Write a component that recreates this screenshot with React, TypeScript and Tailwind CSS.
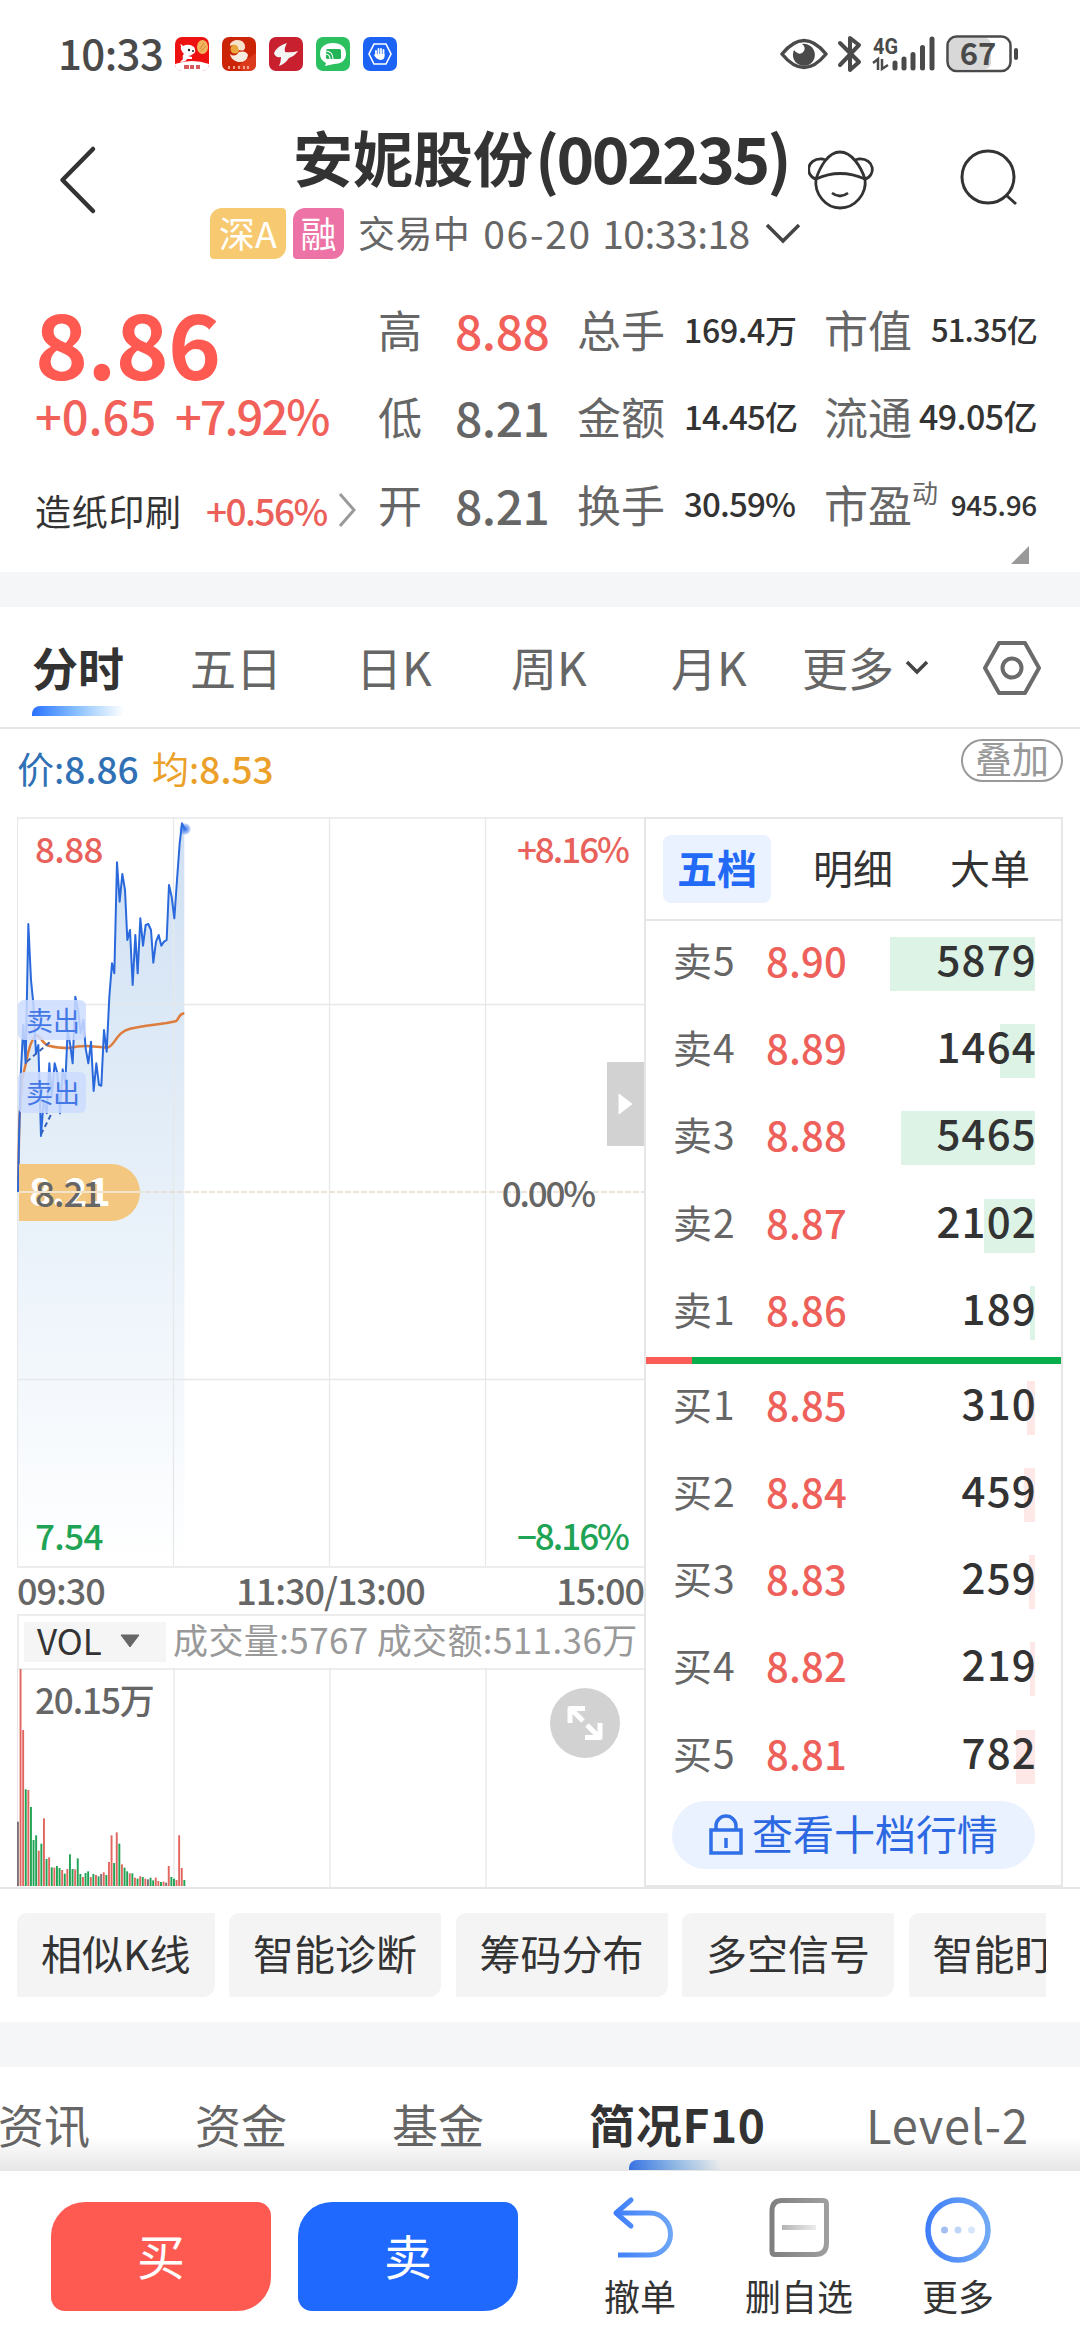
import type { ReactNode } from 'react'

const quoteRows = [
  { a: '高', av: '8.88', up: true, b: '总手', bv: '169.4万', bs: 'text-[32px] tracking-[-0.3px]', c: '市值', cv: '51.35亿', cs: 'text-[31px] tracking-[-0.8px]' },
  { a: '低', av: '8.21', up: false, b: '金额', bv: '14.45亿', bs: 'text-[33px] tracking-[-0.8px]', c: '流通', cv: '49.05亿', cs: 'text-[34px] tracking-[-0.6px]' },
  { a: '开', av: '8.21', up: false, b: '换手', bv: '30.59%', bs: 'text-[33px] tracking-[-0.8px]', c: '市盈', cv: '945.96', cs: 'text-[28px] tracking-[-0.3px]' },
]

const sells = [
  { name: '卖5', price: '8.90', vol: 5879, bar: 145 },
  { name: '卖4', price: '8.89', vol: 1464, bar: 35 },
  { name: '卖3', price: '8.88', vol: 5465, bar: 134 },
  { name: '卖2', price: '8.87', vol: 2102, bar: 51 },
  { name: '卖1', price: '8.86', vol: 189, bar: 5 },
]

const buys = [
  { name: '买1', price: '8.85', vol: 310, bar: 8 },
  { name: '买2', price: '8.84', vol: 459, bar: 11 },
  { name: '买3', price: '8.83', vol: 259, bar: 6 },
  { name: '买4', price: '8.82', vol: 219, bar: 5 },
  { name: '买5', price: '8.81', vol: 782, bar: 19 },
]

const pricePoints =
  '54,1176 57,1020 62,830 70,675 77,790 85,372 93,540 100,610 108,760 115,735 123,1008 131,900 140,940 148,790 155,890 164,790 172,820 180,940 188,808 196,850 203,690 210,730 218,790 226,590 235,635 242,700 250,660 257,745 265,790 273,725 281,873 289,790 297,855 304,857 312,690 320,755 328,590 336,490 343,520 351,187 359,305 367,222 375,270 382,420 390,390 398,555 406,405 413,520 421,355 429,437 437,375 445,372 453,390 460,488 468,425 476,405 484,437 492,425 500,420 507,255 515,290 523,355 531,240 539,130 546,70 553,85'

const avgPath =
  'M54,1176 L58,960 L66,840 L80,780 Q90,722 108,706 C125,706 125,735 150,738 C165,742 185,744 205,744 C225,740 240,737 260,738 C285,740 300,743 325,742 C345,735 350,695 390,686 C420,680 460,674 500,669 Q518,666 527,664 C537,660 534,642 553,640'

// r = rise, g = fall, k = flat; height in thirds of a pixel
const volumes: [number, string][] = [
  [193, 'k'], [651, 'r'], [468, 'r'], [290, 'g'], [288, 'r'], [237, 'g'], [138, 'g'], [152, 'g'], [106, 'r'], [127, 'g'],
  [203, 'r'], [81, 'g'], [86, 'r'], [56, 'g'], [55, 'r'], [60, 'g'], [54, 'g'], [48, 'r'], [37, 'g'], [51, 'r'],
  [95, 'g'], [51, 'g'], [50, 'r'], [83, 'g'], [36, 'g'], [27, 'r'], [39, 'g'], [44, 'g'], [27, 'r'], [36, 'g'],
  [33, 'r'], [29, 'g'], [36, 'k'], [41, 'r'], [33, 'g'], [72, 'r'], [152, 'r'], [69, 'g'], [161, 'r'], [127, 'g'],
  [65, 'r'], [55, 'g'], [44, 'g'], [38, 'r'], [38, 'g'], [25, 'r'], [22, 'g'], [29, 'r'], [27, 'g'], [22, 'r'],
  [20, 'k'], [25, 'g'], [17, 'g'], [25, 'r'], [15, 'r'], [12, 'g'], [13, 'r'], [10, 'k'], [60, 'r'], [27, 'g'],
  [22, 'g'], [18, 'r'], [152, 'r'], [54, 'r'], [18, 'g'],
]

const volColor: Record<string, string> = { r: '#e0665f', g: '#1fa355', k: '#7a7376' }

const StatusBar = () => (
  <div className="flex h-[108px] items-center pl-[58px] pr-[60px] text-[#4a4a4a]">
    <span className="w-[117px] whitespace-nowrap text-[42px] leading-none font-medium tracking-[-0.6px] pb-1">10:33</span>
    <div className="flex gap-[13px]">
      <svg width="34" height="34" viewBox="0 0 34 34">
        <rect width="34" height="34" rx="7" fill="#ee1111" />
        <path d="M0 27 Q17 21 34 27 Q34 34 27 34 H7 Q0 34 0 27Z" fill="#fff" />
        <path d="M6 9 Q4 5 8 9 Q14 6 19 10 Q22 15 18 17 Q16 19 13 19 L17 20 V22 L12 22 Q11 25 5 25 L8 22 Q7 18 9 17 Q5 13 6 9Z" fill="#fff" />
        <circle cx="14" cy="13" r="1.2" fill="#222" />
        <circle cx="18" cy="14" r="1" fill="#222" />
        <ellipse cx="27.500" cy="10" rx="5.500" ry="7" fill="#f0b45c" />
        <path d="M25 12 L29 6 M26 14 L31 9" stroke="#c97a28" strokeWidth="0.8" />
        <path d="M9 28h5v4h-5zM15 28h4v4h-4zM21 28h4v4h-4z" fill="#c33" opacity=".8" />
      </svg>
      <svg width="34" height="34" viewBox="0 0 34 34">
        <rect width="34" height="34" rx="7" fill="#cc2407" />
        <path d="M34 16 L14 30 L22 34 H27 Q34 34 34 27Z" fill="#dc3a1c" />
        <circle cx="13" cy="12" r="4.500" fill="#e8a53c" />
        <path d="M8 7 Q12 1 20 4 Q25 8 22 13 Q16 15 16 10 Q14 6 8 9Z" fill="#f6e3cc" />
        <path d="M8 17 Q13 21 17 15 Q24 13 26 18 Q25 26 16 25 Q9 23 8 17Z" fill="#f8ece0" />
        <path d="M7 29v3M12 29v3M17 29v3M22 29v3M26 29v3" stroke="#f6c9b8" strokeWidth="1.500" />
      </svg>
      <svg width="34" height="34" viewBox="0 0 34 34">
        <rect width="34" height="34" rx="7" fill="#c8202f" />
        <path d="M18 6 Q8 9 5 16 Q6 21 12 20 Q12 25 10 29 Q16 27 20 21 Q26 19 29 14 Q23 16 16 15 Q15 11 18 6Z" fill="#f4f4f4" />
      </svg>
      <svg width="34" height="34" viewBox="0 0 34 34">
        <rect width="34" height="34" rx="7" fill="#2bc160" />
        <path d="M17 6 C25 6 30 10 30 17 C30 24 24 27 18 27 L9 29 L10 26 C6 24 4 21 4 17 C4 10 9 6 17 6Z" fill="#fff" />
        <rect x="10" y="12" width="15" height="10" rx="1.500" fill="#22b457" />
        <path d="M9 17 q5 0 5 5 M9 14 q8 0 8 8" stroke="#fff" strokeWidth="1.200" fill="none" />
      </svg>
      <svg width="34" height="34" viewBox="0 0 34 34">
        <rect width="34" height="34" rx="7" fill="#1c62f5" />
        <path d="M11 7 H23 L28 17 L23 27 H11 L6 17Z" fill="none" stroke="#fff" strokeWidth="1.600" />
        <path d="M13 18 V14 M15.500 18 V12 M18 18 V12 M20.500 18 V13" stroke="#fff" strokeWidth="1.800" strokeLinecap="round" />
        <path d="M12 17 H21.500 V20 Q21 23 17 23 Q13 22 11 18Z" fill="#fff" />
      </svg>
    </div>
    <svg className="ml-auto" width="240" height="40" viewBox="0 0 240 40" fill="none">
      <path d="M2 20 Q24 -7 46 20 Q24 47 2 20Z" stroke="#4a4a4a" strokeWidth="3.500" strokeLinejoin="round" />
      <path d="M22 10 A11 11 0 1 1 14 16 Q20 23 24 17 Q26 13 22 10Z" fill="#4a4a4a" />
      <path d="M60 9 L79 28 L70 36 V4 L79 11 L60 31" stroke="#4a4a4a" strokeWidth="4" strokeLinejoin="round" strokeLinecap="round" />
      <text x="93" y="19.500" fontSize="22" fontWeight="700" fill="#4a4a4a" textLength="25" lengthAdjust="spacingAndGlyphs" fontFamily="Roboto, sans-serif">4G</text>
      <path d="M93 29 L98 25 V36 M102 25 V35 L108 31" stroke="#4a4a4a" strokeWidth="2.500" />
      <path d="M115 29 V34 M124 25 V34 M133 20.500 V34 M142.500 13.500 V34 M152 5 V34" stroke="#4a4a4a" strokeWidth="5" strokeLinecap="round" />
      <rect x="169" y="4" width="42" height="31" rx="6" fill="#d8d8d8" />
      <rect x="211" y="4" width="22" height="31" rx="6" fill="#fff" />
      <rect x="167.500" y="2.500" width="63" height="34.500" rx="9" stroke="#4a4a4a" strokeWidth="2.500" />
      <text x="198" y="31" textAnchor="middle" fontSize="31" fontWeight="700" fill="#4a4a4a" fontFamily="'Noto Sans CJK SC', sans-serif">67</text>
      <rect x="234" y="14" width="4" height="12" rx="2" fill="#4a4a4a" />
    </svg>
  </div>
)

const Tag = ({ color, children }: { color: string; children: ReactNode }) => (
  <span className={`flex h-[51px] items-center justify-center rounded-tl-[12px] rounded-tr-[4px] rounded-br-[12px] rounded-bl-[4px] text-[36px] leading-none text-white pb-1 ${color}`}>
    {children}
  </span>
)

const Header = () => (
  <div className="flex h-[174px] text-[#333]">
    <svg className="mt-[33px] ml-[58px] shrink-0" width="40" height="76" viewBox="0 0 40 76" fill="none">
      <path d="M35 8 L4.500 39 L35 70" stroke="#333" strokeWidth="4.500" strokeLinecap="round" strokeLinejoin="round" />
    </svg>
    <div className="ml-[112px] flex w-[598px] shrink-0 flex-col">
      <div className="flex h-[100px] items-center pl-[83px] pb-[5px] whitespace-nowrap font-bold leading-none">
        <span className="text-[60px]">安妮股份</span>
        <span className="ml-[2px] text-[64px] tracking-[-2.6px]">(002235)</span>
      </div>
      <div className="flex items-center text-[#666]">
        <Tag color="w-[76px] bg-[#f7c970]">深A</Tag>
        <Tag color="ml-[7px] w-[51px] bg-[#ed73a6]">融</Tag>
        <span className="ml-[14px] pb-[3px] text-[37px] leading-none tracking-[0.4px]">交易中</span>
        <span className="ml-[13px] w-[119px] pb-[3px] text-[39px] leading-none whitespace-nowrap tracking-[1.7px]">06-20</span>
        <span className="w-[150px] pb-[3px] text-[39px] leading-none whitespace-nowrap tracking-[-0.5px]">10:33:18</span>
        <svg className="ml-[13px]" width="36" height="22" viewBox="0 0 36 22" fill="none">
          <path d="M2 2 L18 18 L34 2" stroke="#444" strokeWidth="3.500" />
        </svg>
      </div>
    </div>
    <svg className="mt-[41px] shrink-0" width="66" height="62" viewBox="0 0 66 62" fill="none" stroke="#333" strokeWidth="2.800">
      <path d="M8 30 C12 18 20 3 32 3 C44 3 53 18 57 30" />
      <path d="M8 30 C6 45 18 59 32 59 C47 59 59 45 57 30" />
      <path d="M8 30 Q32 19 57 30" />
      <path d="M8 30 C-3 27 -2 9 14 10 L18 11 M57 30 C68 27 67 9 51 10 L47 11" />
      <path d="M24 44 Q32 50 40 44" />
    </svg>
    <svg className="mt-[41px] ml-[86px] shrink-0" width="60" height="60" viewBox="0 0 60 60" fill="none" stroke="#333" strokeWidth="3">
      <circle cx="28" cy="28" r="26" />
      <path d="M46 46 L56 55" />
    </svg>
  </div>
)

const Quote = () => (
  <div className="relative flex h-[290px] pl-[35px]">
    <div className="w-[343px] text-[#ff5a52]">
      <div className="mt-[10px] text-[90px] leading-[98px] font-bold tracking-[-0.8px]">8.86</div>
      <div className="flex h-[48px] items-center leading-none whitespace-nowrap text-[#f2605a] font-medium">
        <span className="w-[140px] text-[47px]">+0.65</span>
        <span className="text-[47px] tracking-[-2px]">+7.92%</span>
      </div>
      <div className="mt-[47px] flex h-[50px] items-center leading-none whitespace-nowrap">
        <span className="w-[171px] text-[36px] text-[#333] tracking-[0.7px]">造纸印刷</span>
        <span className="w-[130px] text-[37px] text-[#ec605a] font-medium tracking-[-1.6px]">+0.56%</span>
        <svg width="22" height="38" viewBox="0 0 22 38" fill="none">
          <path d="M4 3 L18 19 L4 35" stroke="#9a9a9a" strokeWidth="3" />
        </svg>
      </div>
    </div>
    <div className="flex flex-col pt-[5px]">
      {quoteRows.map((r) => (
        <div key={r.a} className="flex h-[87.500px] w-[659px] items-center pb-[4px] leading-none whitespace-nowrap text-[#333]">
          <span className="w-[77px] text-[44px] text-[#666]">{r.a}</span>
          <span className={r.up ? 'w-[122px] text-[48px] font-medium text-[#f2605a] tracking-[-0.5px]' : 'w-[122px] text-[48px] font-medium text-[#666] tracking-[-0.5px]'}>{r.av}</span>
          <span className="w-[107px] text-[44px] text-[#666]">{r.b}</span>
          <span className={`w-[140px] font-medium ${r.bs}`}>{r.bv}</span>
          <span className="flex text-[44px] text-[#666]">
            {r.c}
            {r.c === '市盈' && <span className="-mt-[4px] text-[26px] leading-[28px]">动</span>}
          </span>
          <span className={`ml-auto font-medium ${r.cs}`}>{r.cv}</span>
        </div>
      ))}
    </div>
    <svg className="absolute right-[51px] bottom-[8px]" width="18" height="18">
      <path d="M18 0 V18 H0Z" fill="#999" />
    </svg>
  </div>
)

const PeriodTabs = () => (
  <div className="flex h-[122px] border-b-2 border-[#e6e6e6] text-[46px] leading-none whitespace-nowrap text-[#666]">
    <div className="ml-[32px] w-[158px] pt-[36px]">
      <span className="font-bold text-[#333]">分时</span>
      <div className="mt-[17px] h-[10px] w-[92px] rounded-tl-[8px] bg-linear-to-r from-[#2a70ff] via-[#8cc2ff] to-white" />
    </div>
    <span className="w-[166px] pt-[36px]">五日</span>
    <span className="w-[155px] pt-[36px]">日K</span>
    <span className="w-[160px] pt-[36px]">周K</span>
    <span className="w-[131px] pt-[36px]">月K</span>
    <span className="w-[103px] pt-[36px]">更多</span>
    <svg className="mt-[53px]" width="24" height="15" viewBox="0 0 24 15" fill="none">
      <path d="M2 2 L12 12 L22 2" stroke="#444" strokeWidth="3.500" />
    </svg>
    <svg className="mt-[33px] ml-[53px]" width="60" height="56" viewBox="0 0 60 56" fill="none" stroke="#6b6b6b" strokeWidth="4">
      <path d="M17 3 H43 L57 28 L43 53 H17 L3 28Z" strokeLinejoin="round" />
      <circle cx="30" cy="28" r="9.500" />
    </svg>
  </div>
)

const MinuteChart = () => (
  <div className="relative h-[751px] w-[627px]">
    <svg className="block" width="627" height="751" viewBox="0 0 627 751" fill="none">
      <defs>
        <linearGradient id="area" x1="0" y1="0" x2="0" y2="750" gradientUnits="userSpaceOnUse">
          <stop offset="0" stopColor="#cfe0f3" />
          <stop offset="0.5" stopColor="#e7f0f9" />
          <stop offset="1" stopColor="#ffffff" />
        </linearGradient>
        <radialGradient id="dot">
          <stop offset="0" stopColor="#2a6ae8" />
          <stop offset="1" stopColor="#2a6ae8" stopOpacity="0.2" />
        </radialGradient>
      </defs>
      <path d={`M0,750 L${pricePoints.split(' ').map((p) => p.split(',').map((v) => (Number(v) / 3 - 17).toFixed(1)).join(',')).join(' L')} L167.500,750Z`} fill="url(#area)" />
      <path d="M0.500 1 H627 M0 187.500 H627 M0 562.500 H627 M0 750 H627 M0.500 0 V750 M156.500 0 V750 M312.500 0 V750 M468.500 0 V750" stroke="#e6e8ea" strokeWidth="1.300" />
      <path d="M0 375 H627" stroke="#e6dccd" strokeWidth="1.500" strokeDasharray="6 2" />
      <g transform="translate(-17 -17) scale(0.33333)">
        <path d={avgPath} stroke="#dd7d3d" strokeWidth="7.500" />
        <polyline points={pricePoints} stroke="#2a69dc" strokeWidth="6" strokeLinejoin="round" />
        <circle cx="555" cy="87" r="17" fill="url(#dot)" />
        <path d="M80 785 L155 722 M123 1003 L155 940" stroke="#3563b8" strokeWidth="6" strokeDasharray="15 10" />
      </g>
    </svg>
    <div className="absolute top-[183px] left-[1px] h-[40px] w-[68px] rounded-[6px] bg-[#cddcff]/85 pl-[8px] pt-[6px] text-[27px] leading-none whitespace-nowrap text-[#4478e6]">卖出</div>
    <div className="absolute top-[255px] left-[1px] h-[41px] w-[68px] rounded-[6px] bg-[#cddcff]/85 pl-[8px] pt-[6px] text-[27px] leading-none whitespace-nowrap text-[#4478e6]">卖出</div>
    <div className="absolute top-[347px] left-[2px] h-[57px] w-[121px] rounded-r-full bg-[#f3c77f]" />
    <div className="absolute top-[353px] left-[12px] text-[39px] leading-none font-bold text-white">8.21</div>
    <div className="absolute top-[357px] left-[18px] text-[35px] leading-none font-medium text-[#666] tracking-[-1px]">8.21</div>
    <div className="absolute top-[374px] left-[2px] h-[2px] w-[121px] bg-[#f2e3cc]" />
    <div className="absolute top-[13px] left-[18px] text-[35px] leading-none font-medium text-[#e8625b] tracking-[-0.6px]">8.88</div>
    <div className="absolute top-[13px] right-[16px] text-[35px] leading-none font-medium text-[#e8625b] tracking-[-2px]">+8.16%</div>
    <div className="absolute top-[357px] right-[50px] text-[35px] leading-none font-medium text-[#666] tracking-[-2.2px]">0.00%</div>
    <div className="absolute top-[700px] left-[18px] text-[35px] leading-none font-medium text-[#1fa355] tracking-[-0.6px]">7.54</div>
    <div className="absolute top-[700px] right-[16px] text-[35px] leading-none font-medium text-[#1fa355] tracking-[-2px]">−8.16%</div>
    <div className="absolute top-[245px] right-0 flex h-[84px] w-[37px] items-center justify-center bg-[#d2d2d2]">
      <svg width="15" height="22">
        <path d="M1 1 L14 11 L1 21Z" fill="#fff" stroke="#fff" strokeLinejoin="round" />
      </svg>
    </div>
  </div>
)

const VolumeChart = () => (
  <div className="relative h-[219px] w-[627px]">
    <svg className="block" width="627" height="219" fill="none">
      <path d="M0 1 H627 M0.500 0 V219 M157 0 V219 M313 0 V219 M469 0 V219" stroke="#e6e8ea" strokeWidth="1.300" />
      {volumes.map(([h, c], i) => (
        <rect key={i} x={i * 2.6} y={218 - h / 3} width="1.9" height={h / 3} fill={volColor[c]} />
      ))}
    </svg>
    <div className="absolute top-[13px] left-[18px] text-[35px] leading-none font-medium text-[#666] tracking-[-1.1px]">20.15万</div>
    <div className="absolute top-[20px] right-[24px] flex h-[70px] w-[70px] items-center justify-center rounded-full bg-[#d2d2d2]">
      <svg width="38" height="38" viewBox="0 0 38 38" fill="none" stroke="#fff" strokeWidth="5" strokeLinejoin="round">
        <path d="M4 19 V4.500 H19 M5 5 L17 17 M19 33.500 H34 V19 M21 21 L33 33" />
      </svg>
    </div>
  </div>
)

const BookRow = ({ row, bg }: { row: (typeof sells)[number]; bg: string }) => (
  <div className="relative flex h-[54px] pl-[27px] pr-[26px] leading-none whitespace-nowrap">
    <div className={`absolute top-0 right-[26px] h-full ${bg}`} style={{ width: row.bar }} />
    <span className="relative mt-[3px] w-[93px] text-[39px] text-[#666] tracking-[1px]">{row.name}</span>
    <span className="relative mt-[3px] text-[40px] font-medium text-[#ee605a] tracking-[0.2px]">{row.price}</span>
    <span className="relative -mr-[2px] ml-auto text-[42px] font-medium text-[#333] tracking-[1.2px]">{row.vol}</span>
  </div>
)

const OrderBook = () => (
  <div className="flex h-[1070px] w-[419px] flex-col border-2 border-[#e6e6e6] bg-white">
    <div className="flex h-[102px] items-center border-b-2 border-[#e6e6e6] pb-[1px] text-[40px] leading-none whitespace-nowrap text-[#333]">
      <span className="ml-[17px] flex h-[68px] w-[108px] items-center justify-center rounded-[8px] bg-[#ebf2ff] pb-[4px] font-bold text-[40px] text-[#2269f5]">五档</span>
      <span className="ml-[42px] pb-[4px]">明细</span>
      <span className="ml-[57px] pb-[4px]">大单</span>
    </div>
    <div className="flex flex-col gap-[33.200px] pt-[16px]">
      {sells.map((r) => (
        <BookRow key={r.name} row={r} bg="bg-[#dcf3e6]" />
      ))}
    </div>
    <div className="mt-[17px] flex h-[7px] shrink-0">
      <div className="w-[46px] bg-[#fb5c55]" />
      <div className="flex-1 bg-[#07ae4b]" />
    </div>
    <div className="flex flex-col gap-[33.200px] pt-[17px]">
      {buys.map((r) => (
        <BookRow key={r.name} row={r} bg="bg-[#fde8e7]" />
      ))}
    </div>
    <div className="mt-[17px] ml-[26px] flex h-[68px] w-[363px] shrink-0 items-center rounded-full bg-[#ebf2ff] pl-[37px] text-[#2b68e2]">
      <svg width="34" height="42" viewBox="0 0 34 42" fill="none" stroke="#2f6fe8" strokeWidth="3.500">
        <rect x="2" y="16" width="30" height="23" />
        <path d="M7 16 V12 A10 10 0 0 1 27 12 V16 M17 24 V34" />
      </svg>
      <span className="ml-[9px] pb-[5px] text-[41px] leading-none whitespace-nowrap">查看十档行情</span>
    </div>
  </div>
)

const Chip = ({ children }: { children: ReactNode }) => (
  <span className="flex h-[84px] shrink-0 items-center rounded-tl-[10px] rounded-tr-[2px] rounded-br-[12px] rounded-bl-[2px] bg-[#f4f4f4] px-[24px] pb-[5px]">
    {children}
  </span>
)

const InfoTabs = () => (
  <div className="relative flex h-[104px] overflow-hidden text-[46px] leading-none whitespace-nowrap text-[#666]">
    <span className="-ml-[2px] w-[197px] pt-[33px]">资讯</span>
    <span className="w-[197px] pt-[33px]">资金</span>
    <span className="w-[197px] pt-[33px]">基金</span>
    <div className="w-[277px] pt-[33px]">
      <span className="font-bold text-[#333] tracking-[0.7px]">简况F10</span>
      <div className="mt-[14px] ml-[40px] h-[10px] w-[92px] rounded-tl-[8px] bg-linear-to-r from-[#3d7bf5] via-[#9cc8f8] to-transparent" />
    </div>
    <span className="pt-[33px] text-[47px] tracking-[0.8px]">Level-2</span>
    <div className="absolute inset-x-0 bottom-0 h-[34px] bg-linear-to-b from-transparent to-black/10" />
  </div>
)

const BottomBar = () => (
  <div className="flex h-[169px] text-[#333]">
    <button className="mt-[31px] ml-[51px] h-[109px] w-[220px] rounded-tl-[34px] rounded-tr-[14px] rounded-br-[34px] rounded-bl-[14px] bg-[#ff5a52] pb-[6px] text-[48px] leading-none text-white">买</button>
    <button className="mt-[31px] ml-[27px] h-[109px] w-[220px] rounded-tl-[34px] rounded-tr-[14px] rounded-br-[34px] rounded-bl-[14px] bg-[#1f69ff] pb-[6px] text-[48px] leading-none text-white">卖</button>
    <div className="ml-[62px] flex w-[120px] flex-col items-center pt-[24px]">
      <svg className="ml-[5px]" width="62" height="66" viewBox="0 0 62 66" fill="none" stroke="url(#blueLine)" strokeWidth="5">
        <defs>
          <linearGradient id="blueLine" x1="0" y1="0" x2="62" y2="0" gradientUnits="userSpaceOnUse">
            <stop offset="0" stopColor="#3d7cfb" />
            <stop offset="1" stopColor="#6fa8f5" />
          </linearGradient>
        </defs>
        <path d="M19 5 L4 18 L19 31" strokeLinecap="round" strokeLinejoin="round" />
        <path d="M4 18 H38 A20.500 21 0 0 1 38 60 H6" />
      </svg>
      <span className="mt-[16px] text-[36px] leading-none whitespace-nowrap">撤单</span>
    </div>
    <div className="ml-[36px] flex w-[126px] flex-col items-center pt-[24px]">
      <svg width="62" height="66" viewBox="0 0 62 66" fill="none">
        <defs>
          <linearGradient id="grayLine" x1="0" y1="0" x2="62" y2="0" gradientUnits="userSpaceOnUse">
            <stop offset="0" stopColor="#7d7d7d" />
            <stop offset="1" stopColor="#a0a0a0" />
          </linearGradient>
          <linearGradient id="dash" x1="0" y1="0" x2="1" y2="0">
            <stop offset="0" stopColor="#b4b4b4" />
            <stop offset="1" stopColor="#ececec" />
          </linearGradient>
        </defs>
        <path d="M14 5.500 H55 Q58.500 5.500 58.500 9 V48 Q58.500 59.500 47 59.500 H7 Q4 59.500 4 56 V16 Q4 5.500 14 5.500Z" stroke="url(#grayLine)" strokeWidth="5" />
        <rect x="14" y="30" width="34" height="5" fill="url(#dash)" />
      </svg>
      <span className="mt-[16px] text-[36px] leading-none whitespace-nowrap">删自选</span>
    </div>
    <div className="ml-[36px] flex w-[120px] flex-col items-center pt-[24px]">
      <svg width="68" height="68" viewBox="0 0 68 68" fill="none">
        <circle cx="34" cy="35" r="30" stroke="url(#blueLine)" strokeWidth="5.500" />
        <circle cx="20.500" cy="35" r="3.500" fill="#a3bff2" />
        <circle cx="34" cy="35" r="3.500" fill="#bfd6f8" />
        <circle cx="47.500" cy="35" r="3.500" fill="#d6e7fb" />
      </svg>
      <span className="mt-[14px] text-[36px] leading-none whitespace-nowrap">更多</span>
    </div>
  </div>
)

const App = () => {
  return (
    <div className="h-[2340px] w-[1080px] overflow-hidden bg-white font-['Noto_Sans_CJK_SC','Noto_Sans',sans-serif]">
      <StatusBar />
      <Header />
      <Quote />
      <div className="h-[35px] bg-[#f5f6f8]" />
      <PeriodTabs />
      <div className="flex h-[88px] pl-[17px] pr-[17px] text-[37px] leading-none">
        <span className="w-[135px] pt-[21px] whitespace-nowrap text-[#3070b5]">价:<span className="font-medium">8.86</span></span>
        <span className="pt-[21px] whitespace-nowrap text-[#eba02a]">均:<span className="font-medium">8.53</span></span>
        <span className="mt-[10px] ml-auto flex h-[43px] w-[102px] items-center justify-center rounded-full border-2 border-[#999] pb-[4px] whitespace-nowrap text-[#999]">叠加</span>
      </div>
      <div className="flex pl-[17px]">
        <div className="w-[627px]">
          <MinuteChart />
          <div className="flex h-[46px] items-center justify-between pb-[4px] text-[36px] leading-none font-medium text-[#666] tracking-[-1px]">
            <span>09:30</span>
            <span>11:30/13:00</span>
            <span>15:00</span>
          </div>
          <div className="flex h-[54px] items-center border-t-2 border-l-2 border-[#ececec] pl-[5px] leading-none whitespace-nowrap">
            <div className="flex h-[40px] w-[142px] items-center bg-[#f5f5f5] pb-[6px] pl-[13px] text-[35px] text-[#333]">
              VOL
              <svg className="ml-[17px] mt-[4px]" width="22" height="14">
                <path d="M2 1 H20 L11 13Z" fill="#666" stroke="#666" strokeLinejoin="round" />
              </svg>
            </div>
            <span className="ml-[7px] pb-[8px] text-[35px] text-[#999] tracking-[0.4px]">成交量:5767</span>
            <span className="ml-[8px] pb-[8px] text-[35px] text-[#999] tracking-[0.4px]">成交额:511.36万</span>
          </div>
          <VolumeChart />
        </div>
        <OrderBook />
      </div>
      <div className="h-[135px] border-t-2 border-[#e6e6e6] pl-[17px] pr-[34px] pt-[24px]">
        <div className="flex gap-[14.500px] overflow-hidden text-[41px] leading-none whitespace-nowrap text-[#333]">
          <Chip>相似K线</Chip>
          <Chip>智能诊断</Chip>
          <Chip>筹码分布</Chip>
          <Chip>多空信号</Chip>
          <Chip>智能盯盘</Chip>
        </div>
      </div>
      <div className="h-[45px] bg-[#f5f6f8]" />
      <InfoTabs />
      <BottomBar />
    </div>
  )
}

export default App
